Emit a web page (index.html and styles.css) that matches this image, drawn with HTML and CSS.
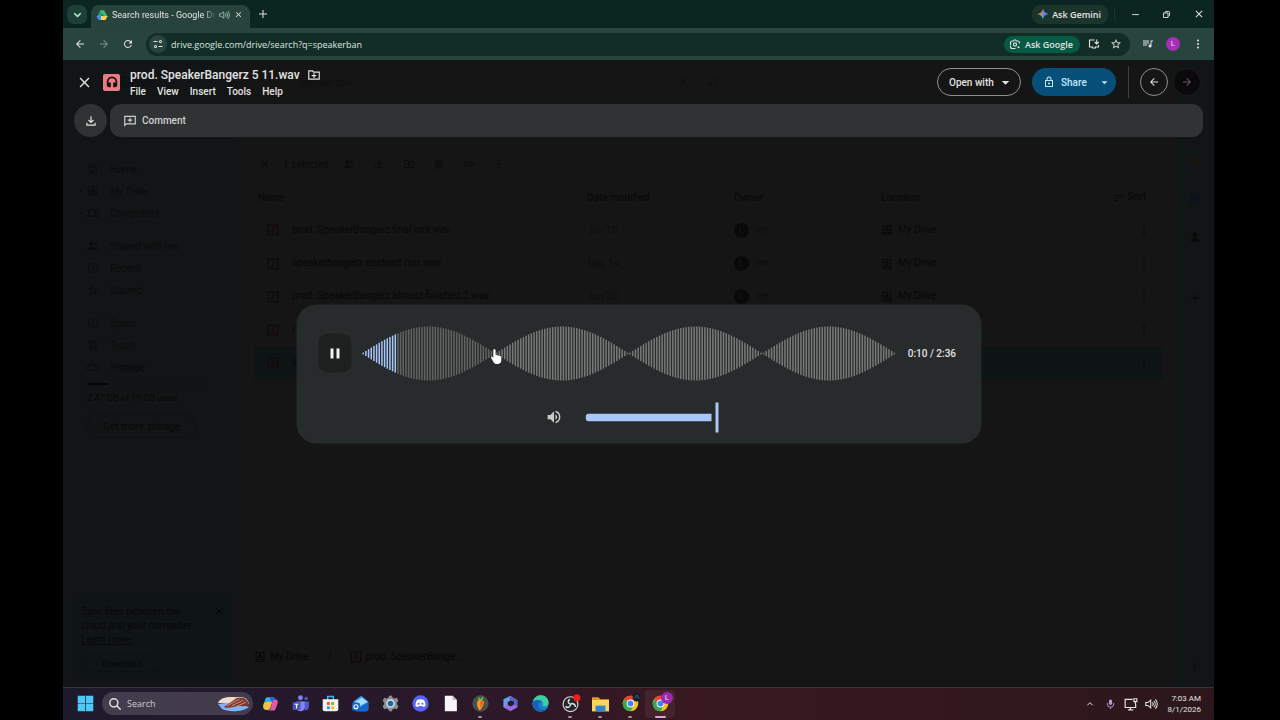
FILE: index.html
```html
<!DOCTYPE html>
<html lang="en">
<head>
    <meta charset="UTF-8">
    <meta name="viewport" content="width=device-width, initial-scale=1.0">
    <title>Search results - Google Drive</title>
    <link rel="stylesheet" href="styles.css">
</head>
<body>
<!-- Icon set -->
<svg class="sprite" aria-hidden="true">
    <symbol id="i-close" viewBox="0 0 24 24"><path d="M19 6.4 17.600 5 12 10.600 6.400 5 5 6.400 10.600 12 5 17.600 6.400 19 12 13.400 17.600 19 19 17.600 13.400 12z"/></symbol>
    <symbol id="i-back" viewBox="0 0 24 24"><path d="M20 11H7.800l5.600-5.600L12 4l-8 8 8 8 1.400-1.400L7.800 13H20z"/></symbol>
    <symbol id="i-forward" viewBox="0 0 24 24"><path d="m12 4-1.400 1.400 5.600 5.600H4v2h12.200l-5.600 5.600L12 20l8-8z"/></symbol>
    <symbol id="i-down" viewBox="0 0 24 24"><path d="m5 7 7 7 7-7 3 3-10 10L2 10z"/></symbol>
    <symbol id="i-caret" viewBox="0 0 24 24"><path d="m2 8 10 10L22 8z"/></symbol>
    <symbol id="i-plus" viewBox="0 0 24 24"><path d="M20 13h-7v7h-2v-7H4v-2h7V4h2v7h7z"/></symbol>
    <symbol id="i-reload" viewBox="0 0 24 24"><path d="M17.650 6.350A8 8 0 1 0 19.730 14h-2.080A6 6 0 1 1 12 6c1.660 0 3.140.69 4.220 1.780L13 11h7V4z"/></symbol>
    <symbol id="i-tune" viewBox="0 0 24 24"><path d="M3 6h8v2H3zM13 16h8v2h-8z"/><path d="M17 4a3 3 0 1 0 0 6 3 3 0 0 0 0-6zm0 1.800a1.200 1.200 0 1 1 0 2.400 1.200 1.200 0 0 1 0-2.400zM7 14a3 3 0 1 0 0 6 3 3 0 0 0 0-6zm0 1.800a1.200 1.200 0 1 1 0 2.400 1.200 1.200 0 0 1 0-2.400z"/></symbol>
    <symbol id="i-volume" viewBox="0 0 24 24"><path d="M3 9v6h4l5 5V4L7 9zm13.500 3A4.500 4.500 0 0 0 14 7.970v8.050A4.500 4.500 0 0 0 16.500 12zM14 3.230v2.060a7 7 0 0 1 0 13.420v2.060a9 9 0 0 0 0-17.540z"/></symbol>
    <symbol id="i-sound" viewBox="0 0 24 24"><path d="M3 9.500v5h3.500l5 4v-13l-5 4zM14.500 9a4.500 4.500 0 0 1 0 6M17 6.500a8 8 0 0 1 0 11M19.500 4a11.500 11.500 0 0 1 0 16" fill="none" stroke="currentColor" stroke-width="1.800"/></symbol>
    <symbol id="i-lens" viewBox="0 0 24 24"><g fill="none" stroke="currentColor" stroke-width="2.200"><path d="M3 14v-4a4 4 0 0 1 4-4h2l1.500-2h3L15 6h2a4 4 0 0 1 4 4v1M3 15v2a4 4 0 0 0 4 4h6"/><circle cx="12" cy="13" r="3.200"/></g><circle cx="19" cy="18.500" r="2.200"/></symbol>
    <symbol id="i-install" viewBox="0 0 24 24"><path d="M13 4H3v14h6v2h6v-2h6v-4M17.500 3v8M13.500 8l4 4 4-4" fill="none" stroke="currentColor" stroke-width="2.200"/></symbol>
    <symbol id="i-star" viewBox="0 0 24 24"><path d="m22 9.240-7.190-.62L12 2 9.190 8.630 2 9.240l5.460 4.730L5.820 21 12 17.270 18.180 21l-1.630-7.030zM12 15.400l-3.760 2.270 1-4.280-3.320-2.880 4.380-.38L12 6.100l1.710 4.040 4.380.38-3.320 2.880 1 4.280z"/></symbol>
    <symbol id="i-queue" viewBox="0 0 24 24"><path d="M2 5h12v2H2zM2 9h12v2H2zM2 13h8v2H2zM17 5h5v2h-3v9a3 3 0 1 1-2-2.800z"/></symbol>
    <symbol id="i-dots" viewBox="0 0 24 24"><circle cx="12" cy="5" r="2"/><circle cx="12" cy="12" r="2"/><circle cx="12" cy="19" r="2"/></symbol>
    <symbol id="i-minimize" viewBox="0 0 24 24"><path d="M3 11h18v2.500H3z"/></symbol>
    <symbol id="i-restore" viewBox="0 0 24 24"><path d="M4 8h12v12H4zM8 8V6a2 2 0 0 1 2-2h8a2 2 0 0 1 2 2v8a2 2 0 0 1-2 2h-2" fill="none" stroke="currentColor" stroke-width="2.400"/></symbol>
    <symbol id="i-movefolder" viewBox="0 0 24 24"><path d="M2 4h8l2 2h10v14H2zm2 2v12h16V8h-9L9 6zM11 9h2v3h3v2h-3v3h-2v-3H8v-2h3z"/></symbol>
    <symbol id="i-headphones" viewBox="0 0 24 24"><path d="M12 2.500a9 9 0 0 0-9 9V17a4 4 0 0 0 4 4h3v-8H6v-1.500a6 6 0 0 1 12 0V13h-4v8h3a4 4 0 0 0 4-4v-5.500a9 9 0 0 0-9-9z"/></symbol>
    <symbol id="i-lock" viewBox="0 0 24 24"><path d="M18 8h-1V6A5 5 0 0 0 7 6v2H4v14h16V8zM9 6a3 3 0 0 1 6 0v2H9zm9 14H6V10h12zm-6-3a2 2 0 1 0 0-4 2 2 0 0 0 0 4z"/></symbol>
    <symbol id="i-download" viewBox="0 0 24 24"><path d="M18 15v3H6v-3H4v5h16v-5zM17 11l-1.400-1.400-2.600 2.600V4h-2v8.200L8.400 9.600 7 11l5 5z"/></symbol>
    <symbol id="i-comment" viewBox="0 0 24 24"><path d="M22 3H2v19l4-4h16zM4 5h16v11H5l-1 1zm7 1.500h2v3h3v2h-3v3h-2v-3H8v-2h3z"/></symbol>
    <symbol id="i-home" viewBox="0 0 24 24"><path d="M12 3 4 9v12h16V9zm6 16h-4v-6h-4v6H6v-9l6-4.500 6 4.500z"/></symbol>
    <symbol id="i-drive" viewBox="0 0 24 24"><path d="M19 2H5a2 2 0 0 0-2 2v16a2 2 0 0 0 2 2h14a2 2 0 0 0 2-2V4a2 2 0 0 0-2-2zm0 18H5v-2h14zm0-4H5V4h14zM10.500 6 7 12l1.500 2.500h7L17 12l-3.500-6zm1.500 3 2 3.500h-4z"/></symbol>
    <symbol id="i-computers" viewBox="0 0 24 24"><path d="M4 6h17V4H2v13H0v3h13v-3H4zm20 2h-9v12h9zm-2 9h-5v-7h5z"/></symbol>
    <symbol id="i-people" viewBox="0 0 24 24"><path d="M9 12a4 4 0 1 0 0-8 4 4 0 0 0 0 8zm0 2c-3 0-8 1.300-8 4v2h16v-2c0-2.700-5-4-8-4zM16 12a4 4 0 0 0 0-8v8zM18 14.500c1.500 1 2 2 2 3.500v2h3v-2c0-2-2.500-3-5-3.500z"/></symbol>
    <symbol id="i-clock" viewBox="0 0 24 24"><path d="M12 2a10 10 0 1 0 0 20 10 10 0 0 0 0-20zm0 18a8 8 0 1 1 0-16 8 8 0 0 1 0 16zm1-13h-2v6l4.500 3 1-1.600-3.500-2.200z"/></symbol>
    <symbol id="i-spam" viewBox="0 0 24 24"><path d="M12 2a10 10 0 1 0 0 20 10 10 0 0 0 0-20zm0 18a8 8 0 1 1 0-16 8 8 0 0 1 0 16zM11 7h2v7h-2zM11 15.500h2v2h-2z"/></symbol>
    <symbol id="i-trash" viewBox="0 0 24 24"><path d="M15 4V3H9v1H4v2h1v15h14V6h1V4zm2 15H7V6h10zM9 8h2v9H9zM13 8h2v9h-2z"/></symbol>
    <symbol id="i-cloud" viewBox="0 0 24 24"><path d="M19.350 10A7.500 7.500 0 0 0 5.350 8 6 6 0 0 0 6 20h13a5 5 0 0 0 .35-10zM19 18H6a4 4 0 0 1 0-8h.700a5.500 5.500 0 0 1 10.800 1.500v.5H19a3 3 0 0 1 0 6z"/></symbol>
    <symbol id="i-audio" viewBox="0 0 24 24"><path fill-rule="evenodd" d="M1 1h22v22H1zm3 3v16h16V4z"/><path d="M11 6h4v3h-2v6a2.500 2.500 0 1 1-2-2z"/></symbol>
    <symbol id="i-link" viewBox="0 0 24 24"><path d="M10 7H7a5 5 0 0 0 0 10h3v-2H7a3 3 0 0 1 0-6h3zM8 11h8v2H8zM17 7h-3v2h3a3 3 0 0 1 0 6h-3v2h3a5 5 0 0 0 0-10z"/></symbol>
    <symbol id="i-sort" viewBox="0 0 24 24"><path d="M3 6h18v2H3zM3 11h12v2H3zM3 16h6v2H3z"/></symbol>
    <symbol id="i-person" viewBox="0 0 24 24"><path d="M12 12a4.500 4.500 0 1 0 0-9 4.500 4.500 0 0 0 0 9zm0 1c-4 0-8 2-8 5v3h16v-3c0-3-4-5-8-5z"/></symbol>
    <symbol id="i-search" viewBox="0 0 24 24"><path d="m15 15 6 6M17 10a7 7 0 1 1-14 0 7 7 0 0 1 14 0z" fill="none" stroke="currentColor" stroke-width="2.500" stroke-linecap="round"/></symbol>
    <symbol id="i-chrome" viewBox="0 0 24 24"><circle cx="12" cy="12" r="11" fill="#fbc116"/><path d="M12 12 2.500 6.500a11 11 0 0 1 19 0z" fill="#ea4335"/><path d="M12 12 2.500 6.500A11 11 0 0 0 12 23l4.500-8z" fill="#34a853"/><circle cx="12" cy="12" r="5.500" fill="#fff"/><circle cx="12" cy="12" r="4.200" fill="#4285f4"/></symbol>
</svg>

<div class="screen">
    <!-- Browser tabs -->
    <header class="tabstrip">
        <button class="tab-search" aria-label="Search tabs"><svg class="icon-s"><use href="#i-down"/></svg></button>
        <div class="tab">
            <svg class="icon-m" viewBox="0 0 24 24"><path d="M8 3h8l-8 14H2z" fill="#1ea362"/><path d="M8 3h8l8 13h-8z" fill="#35c46a"/><path d="m1 14 4 8h7V12H6z" fill="#4688f4"/><path d="M10 14h13l-4 8h-9z" fill="#ffd04b"/></svg>
            <span class="tab-title">Search results - Google Drive</span>
            <svg class="icon-m muted"><use href="#i-sound"/></svg>
            <button class="plain" aria-label="Close tab"><svg class="icon-s"><use href="#i-close"/></svg></button>
        </div>
        <button class="plain new-tab" aria-label="New tab"><svg class="icon-m"><use href="#i-plus"/></svg></button>
        <button class="gemini">
            <svg class="icon-m" viewBox="0 0 24 24"><path d="M12 1c1 6 5 10 11 11h-11z" fill="#5a8df5"/><path d="M12 1c-1 6-5 10-11 11h11z" fill="#ef6a5b"/><path d="M12 23c1-6 5-10 11-11h-11z" fill="#4a7df0"/><path d="M12 23c-1-6-5-10-11-11h11z" fill="#5cbf8a"/></svg>
            Ask Gemini
        </button>
        <div class="window-buttons">
            <button class="plain" aria-label="Minimize"><svg class="icon-s"><use href="#i-minimize"/></svg></button>
            <button class="plain" aria-label="Restore"><svg class="icon-s"><use href="#i-restore"/></svg></button>
            <button class="plain" aria-label="Close"><svg class="icon-m"><use href="#i-close"/></svg></button>
        </div>
    </header>

    <!-- Address bar -->
    <div class="toolbar">
        <button class="plain" aria-label="Back"><svg class="icon-m"><use href="#i-back"/></svg></button>
        <button class="plain faded" aria-label="Forward"><svg class="icon-m"><use href="#i-forward"/></svg></button>
        <button class="plain" aria-label="Reload"><svg class="icon-m"><use href="#i-reload"/></svg></button>
        <div class="omnibox">
            <button class="site-info" aria-label="Site information"><svg class="icon-m"><use href="#i-tune"/></svg></button>
            <input type="text" class="url" aria-label="Address" value="drive.google.com/drive/search?q=speakerban">
            <button class="ask-google"><svg class="icon-m"><use href="#i-lens"/></svg>Ask Google</button>
            <button class="plain" aria-label="Install"><svg class="icon-m"><use href="#i-install"/></svg></button>
            <button class="plain" aria-label="Bookmark"><svg class="icon-m"><use href="#i-star"/></svg></button>
        </div>
        <button class="plain" aria-label="Media"><svg class="icon-m"><use href="#i-queue"/></svg></button>
        <button class="profile" aria-label="Profile">L</button>
        <button class="plain" aria-label="Menu"><svg class="icon-m"><use href="#i-dots"/></svg></button>
    </div>

    <div class="page">
        <!-- Drive, dimmed under the viewer -->
        <div class="drive">
            <nav class="sidebar">
                <div class="brand">Drive</div>
                <ul class="nav-list">
                    <li><svg class="icon-m"><use href="#i-home"/></svg>Home</li>
                    <li class="has-arrow"><svg class="icon-m"><use href="#i-drive"/></svg>My Drive</li>
                    <li class="has-arrow"><svg class="icon-m"><use href="#i-computers"/></svg>Computers</li>
                </ul>
                <ul class="nav-list">
                    <li><svg class="icon-m"><use href="#i-people"/></svg>Shared with me</li>
                    <li><svg class="icon-m"><use href="#i-clock"/></svg>Recent</li>
                    <li><svg class="icon-m"><use href="#i-star"/></svg>Starred</li>
                </ul>
                <ul class="nav-list">
                    <li><svg class="icon-m"><use href="#i-spam"/></svg>Spam</li>
                    <li><svg class="icon-m"><use href="#i-trash"/></svg>Trash</li>
                    <li><svg class="icon-m"><use href="#i-cloud"/></svg>Storage</li>
                </ul>
                <div class="quota"><div class="quota-used"></div></div>
                <p class="quota-text">2.47 GB of 15 GB used</p>
                <button class="dim-button storage-button">Get more storage</button>
                <div class="promo">
                    <svg class="icon-m promo-close"><use href="#i-close"/></svg>
                    <p>Sync files between the<br>cloud and your computer.<br><a href="#">Learn more</a></p>
                    <button class="dim-button">Download</button>
                </div>
            </nav>

            <main class="files">
                <div class="search-row">
                    <span class="search-text">speakerban</span>
                    <svg class="icon-m"><use href="#i-close"/></svg>
                    <svg class="icon-m"><use href="#i-tune"/></svg>
                </div>
                <div class="selection">
                    <svg class="icon-m"><use href="#i-close"/></svg>
                    <span>1 selected</span>
                    <svg class="icon-m"><use href="#i-people"/></svg>
                    <svg class="icon-m"><use href="#i-download"/></svg>
                    <svg class="icon-m"><use href="#i-movefolder"/></svg>
                    <svg class="icon-m"><use href="#i-trash"/></svg>
                    <svg class="icon-m"><use href="#i-link"/></svg>
                    <svg class="icon-m"><use href="#i-dots"/></svg>
                </div>
                <table class="file-table">
                    <thead>
                        <tr>
                            <th>Name</th>
                            <th class="col-date">Date modified</th>
                            <th class="col-owner">Owner</th>
                            <th class="col-location">Location</th>
                            <th class="col-sort"><svg class="icon-m"><use href="#i-sort"/></svg> Sort</th>
                        </tr>
                    </thead>
                    <tbody>
                        <tr>
                            <td><svg class="icon-m file-icon"><use href="#i-audio"/></svg>prod. SpeakerBangerz final mix.wav</td>
                            <td class="faint">Jun 10</td>
                            <td class="faint"><span class="owner">L</span>me</td>
                            <td><svg class="icon-m place"><use href="#i-drive"/></svg>My Drive</td>
                            <td class="more"><svg class="icon-m"><use href="#i-dots"/></svg></td>
                        </tr>
                        <tr>
                            <td><svg class="icon-m file-icon"><use href="#i-audio"/></svg>speakerbangerz abstract mix.wav</td>
                            <td class="faint">May 14</td>
                            <td class="faint"><span class="owner">L</span>me</td>
                            <td><svg class="icon-m place"><use href="#i-drive"/></svg>My Drive</td>
                            <td class="more"><svg class="icon-m"><use href="#i-dots"/></svg></td>
                        </tr>
                        <tr>
                            <td><svg class="icon-m file-icon"><use href="#i-audio"/></svg>prod. SpeakerBangerz almost finished 2.wav</td>
                            <td class="faint">Jun 30</td>
                            <td class="faint"><span class="owner">L</span>me</td>
                            <td><svg class="icon-m place"><use href="#i-drive"/></svg>My Drive</td>
                            <td class="more"><svg class="icon-m"><use href="#i-dots"/></svg></td>
                        </tr>
                        <tr>
                            <td><svg class="icon-m file-icon"><use href="#i-audio"/></svg>r</td>
                            <td></td>
                            <td></td>
                            <td></td>
                            <td class="more"><svg class="icon-m"><use href="#i-dots"/></svg></td>
                        </tr>
                        <tr class="selected">
                            <td><svg class="icon-m file-icon"><use href="#i-audio"/></svg>s</td>
                            <td></td>
                            <td></td>
                            <td></td>
                            <td class="more"><svg class="icon-m"><use href="#i-dots"/></svg></td>
                        </tr>
                    </tbody>
                </table>
                <div class="breadcrumb">
                    <svg class="icon-m"><use href="#i-drive"/></svg>
                    <span>My Drive</span>
                    <span class="slash">/</span>
                    <svg class="icon-m file-icon"><use href="#i-audio"/></svg>
                    <span>prod. SpeakerBange...</span>
                </div>
            </main>

            <aside class="rail">
                <span class="dot keep"></span>
                <span class="dot tasks"></span>
                <svg class="icon-m"><use href="#i-person"/></svg>
                <svg class="icon-m rail-plus"><use href="#i-plus"/></svg>
                <span class="rail-end">&rsaquo;</span>
            </aside>
        </div>

        <!-- File viewer -->
        <div class="viewer">
            <div class="viewer-top">
                <button class="plain" aria-label="Close viewer"><svg class="icon-xl"><use href="#i-close"/></svg></button>
                <span class="file-badge"><svg class="icon-l"><use href="#i-headphones"/></svg></span>
                <div class="file-info">
                    <h1>prod. SpeakerBangerz 5 11.wav <svg class="icon-l"><use href="#i-movefolder"/></svg></h1>
                    <div class="menus">
                        <button>File</button>
                        <button>View</button>
                        <button>Insert</button>
                        <button>Tools</button>
                        <button>Help</button>
                    </div>
                </div>
                <button class="open-with">Open with <svg class="icon-s"><use href="#i-caret"/></svg></button>
                <button class="share"><svg class="icon-m"><use href="#i-lock"/></svg>Share <svg class="icon-xs"><use href="#i-caret"/></svg></button>
                <div class="arrows">
                    <button class="round" aria-label="Previous"><svg class="icon-m"><use href="#i-back"/></svg></button>
                    <button class="round off" aria-label="Next"><svg class="icon-m"><use href="#i-forward"/></svg></button>
                </div>
            </div>
            <div class="viewer-tools">
                <button class="download" aria-label="Download"><svg class="icon-l"><use href="#i-download"/></svg></button>
                <div class="comment-bar">
                    <button><svg class="icon-l"><use href="#i-comment"/></svg>Comment</button>
                </div>
            </div>

            <section class="player">
                <div class="player-row">
                    <button class="pause" aria-label="Pause"><span></span><span></span></button>
                    <div class="wave">
                        <svg id="waveform" viewBox="0 0 534 54" preserveAspectRatio="none"></svg>
                        <input type="range" class="seek" aria-label="Seek" min="0" max="156" value="10">
                        <svg class="pointer" viewBox="0 0 12 18"><path d="M3 1.500C3 .5 5.500.5 5.500 1.500V7l5 1.500c1 .3 1.500 1 1.500 2V13c0 3-1.500 4.500-4.500 4.500S3.500 16 2.500 14L.5 10.500c-.5-1 .5-2 1.500-1l1 1z"/></svg>
                    </div>
                    <span class="time">0:10 / 2:36</span>
                </div>
                <div class="volume-row">
                    <button class="plain" aria-label="Mute"><svg class="icon-xl"><use href="#i-volume"/></svg></button>
                    <input type="range" class="volume" aria-label="Volume" min="0" max="100" value="100">
                </div>
            </section>
        </div>
    </div>

    <!-- Taskbar -->
    <footer class="taskbar">
        <button class="task start" aria-label="Start"><svg viewBox="0 0 24 24"><path d="M1 1h10.500v10.500H1zM12.500 1H23v10.500H12.500zM1 12.500h10.500V23H1zM12.500 12.500H23V23H12.500z" fill="#4cc9f5"/></svg></button>
        <label class="task-search">
            <svg class="icon-l"><use href="#i-search"/></svg>
            <input type="text" placeholder="Search" aria-label="Search">
            <svg class="search-art" viewBox="0 0 34 18"><path d="M1 8C3 2 12 1 20 2c7-1 12 1 13 7z" fill="#f1d9d0"/><path d="M1 9c8-1 14-2 22 0l10 3c-5 5-22 6-28 2z" fill="#7fb3f5"/><path d="m7 12 13-9c6-2 12 1 13 7-6 2-8 1-12 1-5 1-9 3-14 1z" fill="#7a3b35"/><path d="m10 11 13-7M15 11l12-6M21 11l9-4" stroke="#d98f6c"/></svg>
        </label>
        <button class="task" aria-label="Copilot"><svg viewBox="0 0 24 24"><path d="M8 3h9l-5 14c-1 3-2 4-5 4-6 0-6-4-5-7L5 5c1-2 2-2 3-2z" fill="#35b3e8"/><path d="M2 14c0-3 3-4 5-4h7l-2 7c-1 3-2 4-5 4-4 0-5-3-5-7z" fill="#f2c23b"/><path d="M16 6c6 0 7 2 6 6l-3 8c-1 2-2 2-4 2H8c4-1 4-3 5-6l2-8z" fill="#e458a6"/><path d="M10 3h5c3 0 4 3 7 4-4 0-5-1-7 2l-1 1z" fill="#2a62d8"/></svg></button>
        <button class="task" aria-label="Teams"><svg viewBox="0 0 24 24"><circle cx="12" cy="4" r="3.500" fill="#7b83eb"/><circle cx="20" cy="5" r="2.500" fill="#5059c9"/><path d="M15 9h9v7c0 4-3 6-6 6z" fill="#5059c9"/><path d="M6 9h12v8c0 8-12 8-12 0z" fill="#8187ee"/><rect x="1" y="10" width="11" height="11" rx="1" fill="#4b53bc"/><path d="M4 13h5M6.500 13v6" stroke="#fff" stroke-width="1.500"/></svg></button>
        <button class="task" aria-label="Store"><svg viewBox="0 0 24 24"><path d="M8 7V2h8v5" fill="none" stroke="#35b8f1" stroke-width="2"/><path d="M1 6h22v14a3 3 0 0 1-3 3H4a3 3 0 0 1-3-3z" fill="#f2f2f2"/><path d="M7 10h4v4H7z" fill="#f25022"/><path d="M13 10h4v4h-4z" fill="#7fba00"/><path d="M7 16h4v4H7z" fill="#00a4ef"/><path d="M13 16h4v4h-4z" fill="#ffb900"/></svg></button>
        <button class="task" aria-label="Outlook"><svg viewBox="0 0 24 24"><path d="m2 9 11-8 10 8v11a3 3 0 0 1-3 3H6l-4-4z" fill="#2f9df0"/><path d="M5 9 14 4l8 6-12 6z" fill="#a7dcff"/><path d="m7 20 16-10v10a3 3 0 0 1-3 3H8z" fill="#1267cf"/><rect y="11" width="11" height="11" rx="2" fill="#1560bd"/><circle cx="5.500" cy="16.500" r="2.800" fill="none" stroke="#fff" stroke-width="1.600"/></svg></button>
        <button class="task" aria-label="Settings"><svg viewBox="0 0 24 24"><path d="m10 1h4l1 3 3 1 3-1 2 4-2 3v2l2 3-2 4-3-1-3 1-1 3h-4l-1-3-3-1-3 1-2-4 2-3v-2L1 8l2-4 3 1 3-1z" fill="#8b9096"/><circle cx="12" cy="12" r="6" fill="#d9e3ec"/><circle cx="12" cy="12" r="4" fill="#21679c"/></svg></button>
        <button class="task" aria-label="Discord"><svg viewBox="0 0 24 24"><circle cx="12" cy="12" r="11.500" fill="#5865f2"/><path d="M7 7c3-1.500 7-1.500 10 0 1.500 2.500 2.200 5.500 2 8.500-1 1-2.500 1.500-3.500 1.500l-1-1.500h-5l-1 1.500c-1 0-2.500-.5-3.500-1.500C4.800 12.500 5.500 9.500 7 7z" fill="#fff"/><circle cx="9.300" cy="12.300" r="1.500" fill="#5865f2"/><circle cx="14.700" cy="12.300" r="1.500" fill="#5865f2"/></svg></button>
        <button class="task" aria-label="Notepad"><svg viewBox="0 0 24 24"><path d="M4 1h11l6 6v16H4z" fill="#f6f6f6"/><path d="M15 1v6h6z" fill="#bcbcc2"/></svg></button>
        <button class="task open" aria-label="FL Studio"><svg viewBox="0 0 24 24"><circle cx="12" cy="12" r="11.500" fill="#48504c"/><path d="M8 8c3-2 6-1 9 1 0 4-3 10-6 13-3-3-5-9-3-14z" fill="#f3962b"/><path d="M9 7c-1-2 0-3 1-4l2 3 3-4c1 2 1 4-1 6z" fill="#6fbf3e"/><path d="m12 8 4 2-4 9z" fill="#e45a1c"/></svg></button>
        <button class="task" aria-label="Microsoft 365"><svg viewBox="0 0 24 24"><path d="M12 1 2 6v11l5 3 3-2V9l7-4z" fill="#6a9be8"/><path d="m12 1 10 6v10l-5 3V10l-7-4z" fill="#5a62c8"/><path d="m2 17 5-3 5 2 5-3 5 4-10 6z" fill="#9a6be0"/><path d="m12 8 4 2v4l-4 2-4-2v-4z" fill="#281a2b"/></svg></button>
        <button class="task" aria-label="Edge"><svg viewBox="0 0 24 24"><circle cx="12" cy="12" r="11.500" fill="#1685d1"/><path d="M1 10C3 3 8 .5 13 .5c6 0 10.500 5 10.500 10 0 4-3 5.500-6 5.500-2 0-3-1-2-3 1-4-3-6-6-6-4 0-7 1-8.500 3z" fill="#3ecf9e"/><path d="M1 10c3-4 10-4 12 0-4 0-5 4-3 7 2 4 7 5 11 2-4 6-13 6-17 1-3-3-4-6-3-10z" fill="#1c62b4"/></svg></button>
        <button class="task open" aria-label="OBS"><svg viewBox="0 0 24 24"><circle cx="12" cy="13" r="10.500" fill="#24242a" stroke="#d8d8dc" stroke-width="1.600"/><path d="M12 13c-4-1-4-5-1-7M12 13c3-2 7 0 7 4M12 13c0 4-4 6-7 3" fill="none" stroke="#d8d8dc" stroke-width="2.200"/><circle cx="21" cy="4" r="5" fill="#ee1c1c"/></svg></button>
        <button class="task open" aria-label="Explorer"><svg viewBox="0 0 24 24"><path d="M0 3h9l3 3h12v17H0z" fill="#d99b22"/><path d="M0 7h24v16H0z" fill="#fdd55e"/><path d="M5 15h14v8H5z" fill="#2f86d4"/></svg></button>
        <button class="task open" aria-label="Chrome"><svg viewBox="0 0 24 24"><use href="#i-chrome"/><circle cx="21" cy="3" r="6" fill="#10222c"/><path d="m18 5 3-5 3 5" fill="none" stroke="#4a7f96"/></svg></button>
        <button class="task open active" aria-label="Chrome, Drive"><svg viewBox="0 0 24 24"><use href="#i-chrome"/></svg><span class="task-badge">L</span></button>
        <div class="tray">
            <svg class="icon-m chevron" viewBox="0 0 24 24"><path d="m4 16 8-8 8 8" fill="none" stroke="currentColor" stroke-width="3"/></svg>
            <svg class="icon-l mic" viewBox="0 0 24 24"><rect x="8.500" y="2" width="7" height="12" rx="3.500"/><path d="M5 10v2a7 7 0 0 0 14 0v-2M12 19v4" fill="none" stroke="currentColor" stroke-width="2"/></svg>
            <svg class="icon-l" viewBox="0 0 24 24"><path d="M15 4H2v14h18v-6M7 22h9M11 18v4M17 3h5v5h-5zM19.500 8v4" fill="none" stroke="currentColor" stroke-width="2"/></svg>
            <svg class="icon-l"><use href="#i-sound"/></svg>
            <div class="clock">7:03 AM<br>8/1/2026</div>
        </div>
    </footer>
</div>
<script src="script.js"></script>
</body>
</html>
```
FILE: styles.css
```css
* {
    box-sizing: border-box;
}

body {
    margin: 0;
    background-color: #000;
    color: #e3e3e3;
    font-family: Roboto, Arial, sans-serif;
    font-size: 10px;
}

button, input {
    font: inherit;
    color: inherit;
    border: none;
    background: none;
    margin: 0;
    padding: 0;
}

svg {
    display: block;
    flex: none;
    fill: currentColor;
    overflow: visible;
}

.sprite {
    position: absolute;
    width: 0;
    height: 0;
}

.icon-xs { width: 7px; height: 7px; }
.icon-s { width: 9px; height: 9px; }
.icon-m { width: 12px; height: 12px; }
.icon-l { width: 14px; height: 14px; }
.icon-xl { width: 17px; height: 17px; }

.plain {
    display: flex;
    align-items: center;
    justify-content: center;
}

.muted { color: #9db5ac; }
.faded { opacity: 0.45; }

.screen {
    display: flex;
    flex-direction: column;
    min-height: 100vh;
    margin: 0 66px 0 63px;
}

/* Browser tabs */
.tabstrip {
    display: flex;
    align-items: center;
    height: 28px;
    padding-left: 4px;
    background-color: #0b2620;
}

.tab-search {
    display: flex;
    align-items: center;
    justify-content: center;
    width: 20px;
    height: 19px;
    margin-right: 4px;
    border-radius: 7px;
    background-color: #1d3f35;
    color: #a6f2d0;
}

.tab {
    display: flex;
    align-items: center;
    gap: 4px;
    align-self: flex-end;
    width: 159px;
    height: 23px;
    padding: 0 7px 0 5px;
    border-radius: 8px 8px 0 0;
    background-color: #26443b;
}

.tab > * { margin-bottom: 4px; }

.tab-title {
    flex: 1;
    overflow: hidden;
    white-space: nowrap;
    font-size: 9px;
    -webkit-mask-image: linear-gradient(to right, #000 88%, transparent);
    mask-image: linear-gradient(to right, #000 88%, transparent);
}

.tab .muted { margin-left: -2px; }

.new-tab { margin-left: 7px; }

.gemini {
    display: flex;
    align-items: center;
    gap: 3px;
    height: 19px;
    margin-left: auto;
    padding: 0 7px 0 5px;
    border-radius: 8px;
    background-color: #1b352d;
    font-family: "Open Sans", sans-serif;
    font-size: 9px;
    font-weight: 600;
}

.window-buttons {
    display: flex;
    gap: 22px;
    margin-left: 6px;
    padding: 0 9px 0 16px;
    border-left: 1px solid #1b352d;
}

/* Address bar */
.toolbar {
    display: flex;
    align-items: center;
    gap: 12px;
    height: 32px;
    padding: 0 10px 0 11px;
    background-color: #27453c;
}

.omnibox {
    display: flex;
    flex: 1;
    align-items: center;
    gap: 10px;
    height: 23px;
    padding: 0 8px 0 3px;
    border-radius: 12px;
    background-color: #122d25;
}

.site-info {
    display: flex;
    align-items: center;
    justify-content: center;
    width: 18px;
    height: 18px;
    border-radius: 9px;
    background-color: #27453c;
}

.url {
    flex: 1;
    margin-left: -6px;
    font-family: "Open Sans", sans-serif;
    font-size: 9px;
    color: #dbe5e1;
}

.ask-google {
    display: flex;
    align-items: center;
    gap: 4px;
    height: 17px;
    margin-right: -2px;
    padding: 0 7px 0 5px;
    border-radius: 9px;
    background-color: #075a43;
    font-family: "Open Sans", sans-serif;
    font-size: 9px;
    font-weight: 600;
}

.profile {
    width: 14px;
    height: 14px;
    border-radius: 7px;
    background-color: #a62db8;
    font-size: 8px;
    line-height: 14px;
    text-align: center;
}

/* Drive, dimmed under the viewer */
.page {
    position: relative;
    display: flex;
    flex: 1;
}

.drive {
    display: grid;
    grid-template-columns: 174px 1fr 39px;
    flex: 1;
    background-color: #151515;
    color: #080808;
}

.sidebar {
    display: flex;
    flex-direction: column;
    padding: 0 6px 7px 12px;
    background-color: #111515;
}

.brand {
    height: 98px;
    padding: 14px 0 0 47px;
    font-size: 14px;
    color: #0c0f0f;
}

.nav-list {
    margin: 0 0 11px;
    padding: 0 0 0 12px;
    list-style: none;
    color: #090c0c;
}

.nav-list li {
    display: flex;
    align-items: center;
    gap: 11px;
    height: 22px;
}

.has-arrow::before {
    content: "";
    width: 2px;
    height: 2px;
    margin: 0 -6px 0 -7px;
    background-color: #080b0b;
}

.quota {
    height: 2px;
    margin: -6px 30px 0 12px;
    background-color: #0f1313;
}

.quota-used {
    width: 20px;
    height: 2px;
    background-color: #020607;
}

.quota-text {
    margin: 7px 0 10px 12px;
    line-height: 12px;
    font-size: 9px;
}

.dim-button {
    align-self: flex-start;
    height: 17px;
    padding: 0 20px;
    border: 1px solid #0d1111;
    border-radius: 12px;
    font-size: 9px;
}

.storage-button {
    height: 24px;
    margin-left: 12px;
    padding: 0 15px;
    font-size: 10px;
}

.promo {
    display: flex;
    flex-direction: column;
    margin-top: auto;
    padding: 8px 6px;
    border-radius: 8px;
    background-color: #0f1415;
}

.promo p {
    margin: 0 0 8px;
    line-height: 14px;
}

.promo a { color: inherit; }

.promo-close {
    align-self: flex-end;
    margin-bottom: -12px;
}

.files {
    display: flex;
    flex-direction: column;
    padding: 0 12px 23px 17px;
}

.search-row {
    display: flex;
    align-items: center;
    height: 44px;
    gap: 18px;
    padding-left: 46px;
    color: #0e0f0f;
}

.search-text { width: 359px; }

.selection {
    display: flex;
    align-items: center;
    gap: 18px;
    height: 77px;
    padding: 50px 5px 7px;
    color: #0b0b0b;
}

.selection span { margin: 0 -4px 0 -6px; }

.file-table {
    width: 100%;
    table-layout: fixed;
    border-collapse: collapse;
}

.file-table th {
    height: 33px;
    padding: 0 4px;
    text-align: left;
    font-weight: 500;
    color: #0a0a0a;
}

.file-table td {
    height: 33px;
    padding: 0 4px;
    border-bottom: 1px solid #131313;
    white-space: nowrap;
}

.col-date, .col-owner { width: 147px; }
.col-location { width: 222px; }
.col-sort { width: 64px; }

.file-table .col-sort { padding: 0 0 0 14px; }

.file-table svg {
    display: inline-block;
    vertical-align: middle;
}

.file-icon { color: #120a0a; }

td .file-icon { margin: 0 13px 0 9px; }

.place { margin-right: 5px; }

.file-table .faint { color: #0d0d0d; }

.file-table .more { padding-left: 39px; }

.owner {
    display: inline-block;
    width: 15px;
    height: 15px;
    margin-right: 6px;
    border-radius: 8px;
    background-color: #0b080c;
    color: #151515;
    font-size: 9px;
    line-height: 15px;
    text-align: center;
}

.selected { background-color: #0e1314; }

.breadcrumb {
    display: flex;
    align-items: center;
    gap: 4px;
    margin-top: auto;
    line-height: 14px;
}

.slash { margin: 0 14px 0 15px; }

.rail {
    display: flex;
    flex-direction: column;
    align-items: center;
    gap: 27px;
    padding: 95px 0 12px;
    background-color: #111515;
}

.dot {
    width: 11px;
    height: 11px;
    border-radius: 6px;
}

.keep { background-color: #16150f; }
.tasks { background-color: #0b1318; }
.rail-plus { margin-top: 22px; }

.rail-end {
    margin-top: auto;
    font-size: 16px;
}

/* File viewer */
.viewer {
    position: absolute;
    inset: 0;
    display: flex;
    flex-direction: column;
}

.viewer-top {
    display: flex;
    align-items: center;
    height: 44px;
    padding: 0 13px;
    font-weight: 500;
}

.file-badge {
    display: flex;
    align-items: center;
    justify-content: center;
    width: 17px;
    height: 17px;
    margin: 0 10px;
    border-radius: 2px;
    background-color: #e77d84;
    color: #1c1011;
}

.file-info {
    flex: 1;
    padding-top: 2px;
}

.file-info h1 {
    display: flex;
    align-items: center;
    gap: 7px;
    margin: 0;
    font-size: 12px;
    font-weight: 500;
    line-height: 17px;
}

.menus {
    display: flex;
    gap: 11px;
    line-height: 16px;
}

.open-with, .share {
    display: flex;
    align-items: center;
    min-width: 84px;
    height: 28px;
    border-radius: 14px;
}

.open-with {
    padding: 0 10px 0 11px;
    border: 1px solid #8e918f;
}

.share {
    gap: 6px;
    margin-left: 11px;
    padding: 0 8px 0 11px;
    background-color: #064f78;
    color: #c2e7ff;
}

.open-with .icon-s, .share .icon-xs { margin-left: auto; }

.arrows {
    display: flex;
    align-items: center;
    gap: 5px;
    height: 32px;
    margin-left: 12px;
    padding-left: 11px;
    border-left: 1px solid #3c4043;
}

.round {
    display: flex;
    align-items: center;
    justify-content: center;
    width: 28px;
    height: 28px;
    border: 1px solid #8e918f;
    border-radius: 14px;
}

.off {
    border-color: #1d1a1d;
    background-color: #0b090b;
    color: #5f5a5f;
}

.viewer-tools {
    display: flex;
    gap: 3px;
    padding: 0 11px;
}

.download {
    display: flex;
    align-items: center;
    justify-content: center;
    width: 33px;
    height: 33px;
    border-radius: 17px;
    background-color: #2e3232;
}

.comment-bar {
    display: flex;
    flex: 1;
    align-items: center;
    height: 33px;
    padding-left: 13px;
    border-radius: 11px;
    background-color: #2f3333;
    color: #d0d2d1;
}

.comment-bar button {
    display: flex;
    align-items: center;
    gap: 5px;
    font-weight: 500;
}

.player {
    position: absolute;
    top: 50%;
    left: 50%;
    width: 685px;
    height: 139px;
    padding: 22px 25px 0 22px;
    border-radius: 20px;
    background-color: #282b2b;
    transform: translate(-50%, -50%);
}

.player-row {
    display: flex;
    align-items: center;
}

.pause {
    display: flex;
    align-items: center;
    justify-content: center;
    gap: 3px;
    width: 33px;
    height: 39px;
    border-radius: 9px;
    background-color: #1d201f;
}

.pause span {
    width: 3px;
    height: 10px;
    background-color: #f2f2f2;
}

.wave {
    position: relative;
    flex: 1;
    height: 54px;
    margin: 0 12px 0 11px;
}

#waveform {
    width: 100%;
    height: 100%;
    color: #787a79;
}

#waveform .played { fill: #a8c7fa; }
#waveform .hovered { fill: #5f6463; }

.seek {
    position: absolute;
    inset: 0;
    width: 100%;
    opacity: 0;
}

.pointer {
    position: absolute;
    top: 22px;
    left: 24%;
    width: 11px;
    height: 16px;
    fill: #fff;
}

.time { font-weight: 500; }

.volume-row {
    display: flex;
    align-items: center;
    justify-content: center;
    gap: 23px;
    height: 30px;
    margin: 22px 10px 0 0;
    color: #c9cbca;
}

.volume {
    width: 133px;
    height: 30px;
    -webkit-appearance: none;
    appearance: none;
}

.volume::-webkit-slider-runnable-track {
    height: 8px;
    border-radius: 4px 0 0 4px;
    background: linear-gradient(#a8c7fa, #a8c7fa) no-repeat left / calc(100% - 7px) 100%;
}

.volume::-webkit-slider-thumb {
    -webkit-appearance: none;
    width: 3px;
    height: 30px;
    margin-top: -11px;
    background-color: #a8c7fa;
}

/* Taskbar */
.taskbar {
    display: flex;
    align-items: center;
    height: 33px;
    padding: 0 0 1px 7px;
    border-top: 1px solid #37343b;
    background: linear-gradient(to right, #1e1a2d, #2a1829 35%, #391820 55%, #2b171c);
}

.task {
    position: relative;
    display: flex;
    align-items: center;
    justify-content: center;
    width: 30px;
    height: 28px;
    border-radius: 4px;
}

.task > svg {
    width: 17px;
    height: 17px;
}

.open::after {
    content: "";
    position: absolute;
    bottom: 0;
    width: 4px;
    height: 2px;
    border-radius: 1px;
    background-color: #9b929a;
}

.active { background-color: #44232c; }

.active::after {
    width: 11px;
    background-color: #d9a9d6;
}

.task-badge {
    position: absolute;
    top: 2px;
    right: 2px;
    width: 12px;
    height: 12px;
    border-radius: 6px;
    background-color: #9c27b0;
    font-size: 8px;
    line-height: 12px;
}

.task-search {
    display: flex;
    align-items: center;
    gap: 5px;
    width: 151px;
    height: 23px;
    margin: 0 2px;
    padding: 0 3px 0 6px;
    border-radius: 12px;
    background-color: #423c4c;
}

.task-search input {
    flex: 1;
    min-width: 0;
    font-family: "Open Sans", sans-serif;
    font-size: 9px;
}

.task-search input::placeholder { color: #cfcbd3; }

.search-art {
    width: 33px;
    height: 18px;
}

.tray {
    display: flex;
    align-items: center;
    gap: 6px;
    margin-left: auto;
    padding-right: 13px;
}

.chevron { width: 8px; margin-right: 5px; }

.mic {
    width: 11px;
    margin-right: 2px;
    color: #b79bd8;
}

.clock {
    margin-left: 3px;
    font-size: 8px;
    line-height: 11px;
    text-align: right;
}
```
FILE: script.js
```js
// Draw the waveform: 200 bars in four humps
var svg = document.getElementById('waveform');
var bars = 200;
var step = 534 / bars;
for (var i = 0; i < bars; i++) {
    var height = Math.max(1, 54 * Math.abs(Math.sin(Math.PI * (i + 0.5) / 50)));
    var bar = document.createElementNS('http://www.w3.org/2000/svg', 'rect');
    bar.setAttribute('x', i * step);
    bar.setAttribute('y', (54 - height) / 2);
    bar.setAttribute('width', 1.5);
    bar.setAttribute('height', height);
    if (i < 13) {
        bar.setAttribute('class', 'played');
    } else if (i < 50) {
        bar.setAttribute('class', 'hovered');
    }
    svg.appendChild(bar);
}
```
